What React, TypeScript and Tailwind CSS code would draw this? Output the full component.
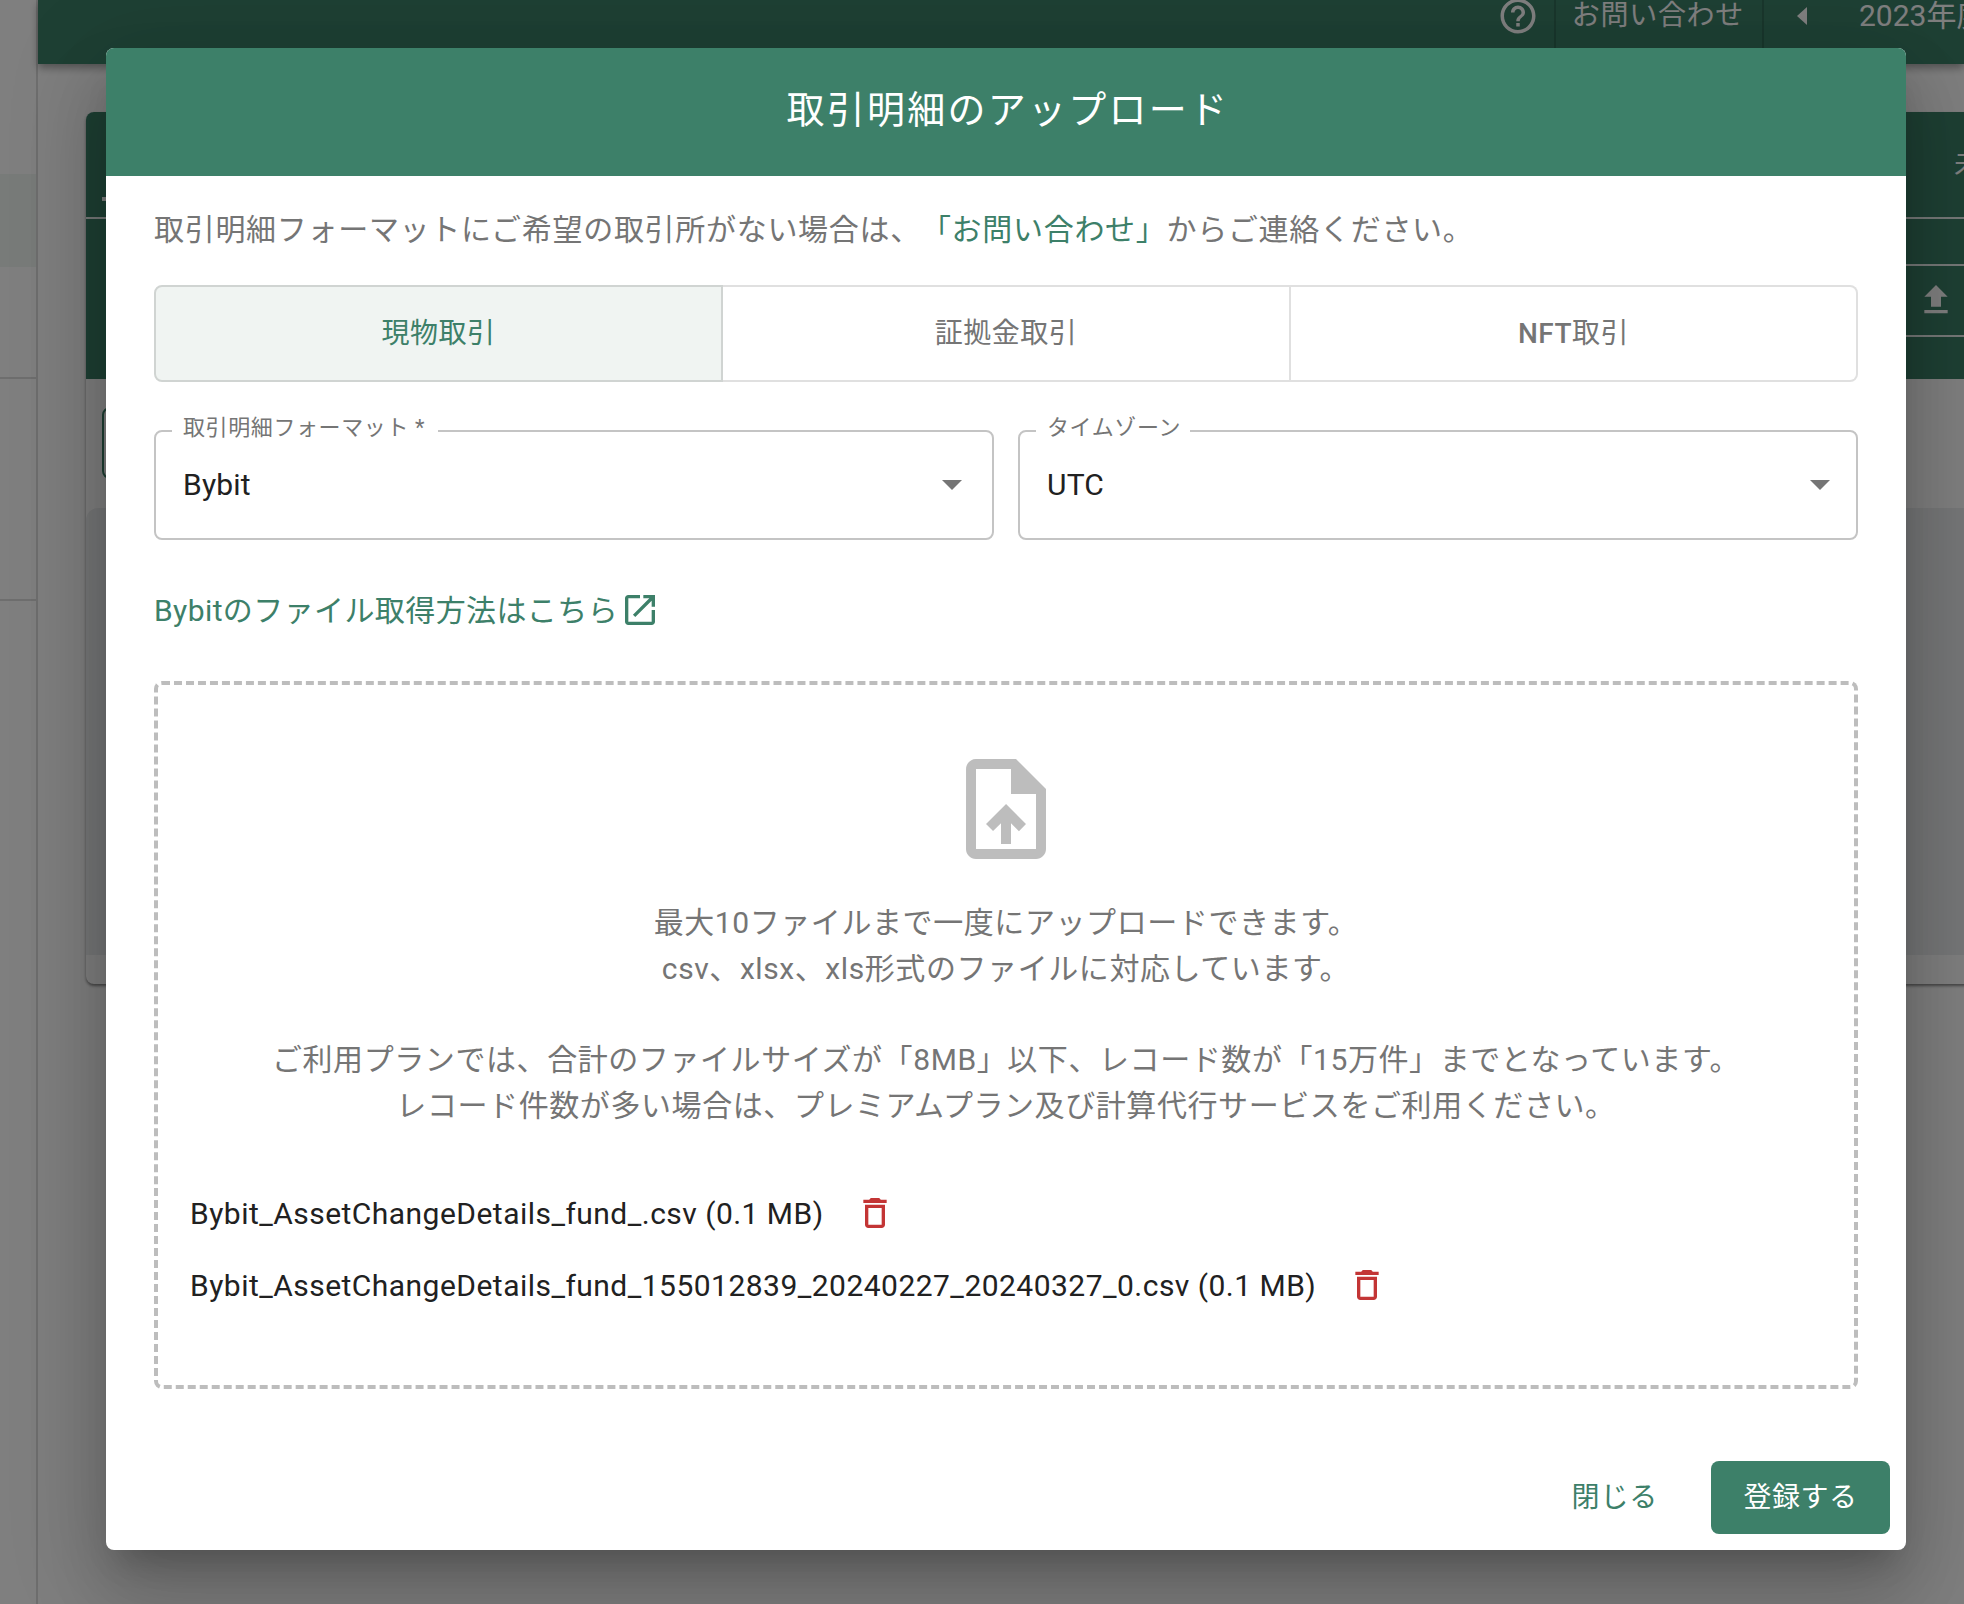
import React from "react";

const Icon = ({ d, className }: { d: string; className: string }) => (
  <svg viewBox="0 0 24 24" fill="currentColor" className={className}>
    <path d={d} />
  </svg>
);

const TRASH = "M6 19c0 1.1.9 2 2 2h8c1.1 0 2-.9 2-2V7H6v12zM8 9h8v10H8V9zm7.5-5l-1-1h-5l-1 1H5v2h14V4h-3.5z";
const OPEN = "M19 19H5V5h7V3H5c-1.11 0-2 .9-2 2v14c0 1.1.89 2 2 2h14c1.1 0 2-.9 2-2v-7h-2v7zM14 3v2h3.59l-9.83 9.83 1.41 1.41L19 6.41V10h2V3h-7z";
const UPLOAD_FILE = "M14 2H6c-1.1 0-1.99.9-1.99 2L4 20c0 1.1.89 2 1.99 2H18c1.1 0 2-.9 2-2V8l-6-6zm4 18H6V4h7v5h5v11zM8 15.01l1.41 1.41L11 14.84V19h2v-4.16l1.59 1.59L16 15.01 12.01 11 8 15.01z";
const HELP = "M11 18h2v-2h-2v2zm1-16C6.48 2 2 6.48 2 12s4.48 10 10 10 10-4.48 10-10S17.52 2 12 2zm0 18c-4.41 0-8-3.59-8-8s3.59-8 8-8 8 3.59 8 8-3.59 8-8 8zm0-14c-2.21 0-4 1.79-4 4h2c0-1.1.9-2 2-2s2 .9 2 2c0 2-3 1.75-3 5h2c0-2.25 3-2.5 3-5 0-2.21-1.79-4-4-4z";

function Select({ label, value, arrowPad, labelPad }: { label: string; value: string; arrowPad: string; labelPad: string }) {
  return (
    <div className={`relative flex h-[110px] w-[840px] shrink-0 items-center justify-between rounded-lg border-2 border-[#c4c4c4] pl-[27px] ${arrowPad}`}>
      <span className={`absolute left-[16px] top-[-18px] bg-white pl-[11px] text-[22px] leading-[28px] tracking-[0.6px] text-[#757575] whitespace-nowrap ${labelPad}`}>
        {label}
      </span>
      <span className="pb-[2px] text-[30px] tracking-[0.2px] text-[#212121]">{value}</span>
      <span className="block h-0 w-0 border-x-[10px] border-t-[10px] border-x-transparent border-t-[#757575]" />
    </div>
  );
}

function FileRow({ name }: { name: string }) {
  return (
    <div className="flex h-[72px] items-center gap-[31px]">
      <span className="text-[30px] tracking-[0.47px] text-[#212121] whitespace-nowrap">{name}</span>
      <Icon d={TRASH} className="h-10 w-10 text-[#c33535]" />
    </div>
  );
}

export default function App() {
  return (
    <div className="relative flex h-[1604px] w-full overflow-hidden bg-white font-[Roboto,'Noto_Sans_CJK_JP',sans-serif] [text-spacing-trim:space-all]">
      {/* side navigation */}
      <aside className="flex h-full w-[38px] shrink-0 flex-col border-r-2 border-[#dcdcdc]">
        <div className="h-[174px]" />
        <div className="h-[93px] bg-[#f0f6f3]" />
        <div className="h-[112px] border-b-2 border-[#dcdcdc]" />
        <div className="h-[222px] border-b-2 border-[#dcdcdc]" />
      </aside>

      <main className="flex min-w-0 flex-1 flex-col">
        {/* top bar */}
        <header className="relative z-10 flex h-16 shrink-0 justify-end bg-[#3d8069] text-white shadow-[0_4px_8px_rgba(0,0,0,0.35)]">
          <div className="flex h-full items-start pr-[15px]">
            <Icon d={HELP} className="h-[42px] w-[42px] -mt-[5px]" />
          </div>
          <div className="flex h-full items-start border-l-2 border-black/15 pl-[16px] pr-[18px]">
            <span className="text-[28px] leading-[32px] tracking-[0.7px] whitespace-nowrap">お問い合わせ</span>
          </div>
          <div className="flex h-full w-[202px] items-start gap-[52px] border-l-2 border-black/15 pl-[33px]">
            <span className="mt-[7px] block h-0 w-0 border-y-[9px] border-r-[10px] border-y-transparent border-r-white" />
            <span className="text-[30px] leading-[32px] whitespace-nowrap">2023年度</span>
          </div>
        </header>

        {/* page card, mostly under the dialog */}
        <section className="ml-[48px] mr-[-20px] mt-[48px] flex h-[872px] flex-col rounded-lg bg-white shadow-[0_2px_3px_rgba(0,0,0,0.45)]">
          <div className="h-[267px] shrink-0 rounded-t-lg bg-[#3d8069] text-white">
            <div className="flex h-[107px] items-center justify-between border-b-2 border-white/90">
              <span className="mb-[16px] ml-[16px] h-[4px] w-[8px] self-end bg-white" />
              <span className="w-[30px] overflow-hidden text-[28px] whitespace-nowrap">未</span>
            </div>
            <div className="ml-[20px] h-[47px] border-b-2 border-white/90" />
            <div className="ml-[20px] flex h-[71px] items-center justify-end border-b-2 border-white/90 pb-[2px] pr-[28px]">
              <svg viewBox="0 0 24 24" fill="currentColor" className="h-10 w-10">
                <path d="M5 20h14v-2H5v2zm0-10h4v6h6v-6h4l-7-7-7 7z" />
              </svg>
            </div>
          </div>
          <div className="flex h-[129px] items-start pl-[16px] pt-[28px]">
            <div className="h-[72px] w-[100px] rounded-lg border-2 border-[#3d8069]" />
          </div>
          <div className="h-[447px] rounded-t-xl bg-[#edeff1]" />
        </section>
      </main>

      {/* backdrop */}
      <div className="absolute inset-0 z-20 bg-black/50" />

      {/* dialog */}
      <div className="absolute left-[106px] top-[48px] z-30 flex h-[1502px] w-[1800px] flex-col overflow-hidden rounded-lg bg-white shadow-[0_22px_30px_-14px_rgba(0,0,0,0.2),0_48px_76px_6px_rgba(0,0,0,0.14),0_18px_92px_16px_rgba(0,0,0,0.12)]">
        <div className="flex h-[128px] shrink-0 items-center justify-center bg-[#3d8069] pb-[4px] pl-[4px]">
          <h2 className="text-[38px] font-normal tracking-[2.25px] text-white">取引明細のアップロード</h2>
        </div>

        <div className="flex flex-1 flex-col px-[48px]">
          <p className="mt-[33px] h-[42px] text-[30px] leading-[42px] tracking-[0.7px] text-[#757575] whitespace-nowrap">
            取引明細フォーマットにご希望の取引所がない場合は、<span className="text-[#3d8069]">「お問い合わせ」</span>からご連絡ください。
          </p>

          <div className="mt-[34px] flex h-[97px] text-[28px]">
            <div className="flex w-[569px] items-center justify-center rounded-l-lg border-2 border-[#d0d4d2] bg-[#f0f4f2] tracking-[0.5px] text-[#3d8069]">現物取引</div>
            <div className="flex w-[568px] items-center justify-center border-y-2 border-r-2 border-[#e0e0e0] tracking-[0.5px] text-[#757575]">証拠金取引</div>
            <div className="flex w-[567px] items-center justify-center rounded-r-lg border-y-2 border-r-2 border-[#e0e0e0] tracking-[0.5px] text-[#757575]">
              <span className="font-medium">NFT</span>取引
            </div>
          </div>

          <div className="mt-[48px] flex gap-[24px]">
            <Select label="取引明細フォーマット *" value="Bybit" arrowPad="pr-[30px]" labelPad="pr-[13px]" />
            <Select label="タイムゾーン" value="UTC" arrowPad="pr-[26px]" labelPad="pr-[9px]" />
          </div>

          <div className="mt-[49px] flex h-[42px] items-center text-[30px] tracking-[0.4px] text-[#3d8069]">
            <span className="whitespace-nowrap">Bybitのファイル取得方法はこちら</span>
            <Icon d={OPEN} className="ml-[2px] h-10 w-10" />
          </div>

          <div className="mt-[50px] flex h-[708px] flex-col rounded-lg border-4 border-dashed border-[#bdbdbd] px-[32px] pt-[64px]">
            <div className="flex justify-center">
              <Icon d={UPLOAD_FILE} className="h-[120px] w-[120px] text-[#bdbdbd]" />
            </div>
            <div className="mt-[31px] text-center text-[30px] leading-[46px] tracking-[0.58px] text-[#757575]">
              <p>最大10ファイルまで一度にアップロードできます。</p>
              <p>csv、xlsx、xls形式のファイルに対応しています。</p>
              <p className="mt-[45px]">ご利用プランでは、合計のファイルサイズが「8MB」以下、レコード数が「15万件」までとなっています。</p>
              <p>レコード件数が多い場合は、プレミアムプラン及び計算代行サービスをご利用ください。</p>
            </div>
            <div className="mt-[48px] flex flex-col">
              <FileRow name="Bybit_AssetChangeDetails_fund_.csv (0.1 MB)" />
              <FileRow name="Bybit_AssetChangeDetails_fund_155012839_20240227_20240327_0.csv (0.1 MB)" />
            </div>
          </div>
        </div>

        <div className="flex items-center justify-end gap-[53px] pb-[16px] pr-[16px]">
          <span className="text-[28px] tracking-[0.8px] text-[#3d8069]">閉じる</span>
          <button className="h-[73px] w-[179px] rounded-lg bg-[#3d8069] text-[28px] tracking-[0.5px] text-white">登録する</button>
        </div>
      </div>
    </div>
  );
}
